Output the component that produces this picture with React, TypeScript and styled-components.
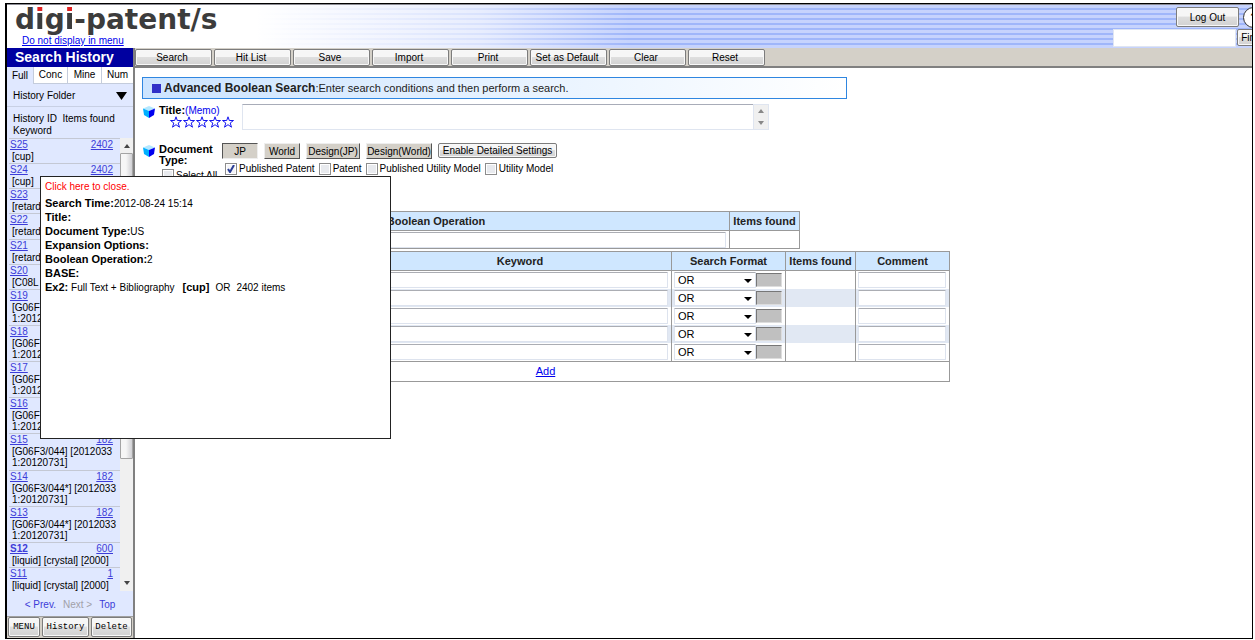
import React from "react";
import styled, { createGlobalStyle, css } from "styled-components";

const Global = createGlobalStyle`
  *, *::before, *::after { box-sizing: border-box; }
  body {
    margin: 0;
    background: #fff;
    color: #000;
    font: 10px/14px "Liberation Sans", Arial, sans-serif;
  }
  b, th { font-size: 11px; }
  button, input, select, textarea { font: inherit; color: inherit; margin: 0; }
`;

const Frame = styled.div`
  position: relative;
  display: flex;
  flex-direction: column;
  min-height: calc(100vh - 4px);
  margin: 3px 2px 1px 5px;
  border: 1px solid #000;
  border-left-width: 2px;
  overflow: hidden;
`;

const Header = styled.header`
  display: flex;
  justify-content: space-between;
  height: 44px;
  border-top: 1px solid #8c8c94;
  background:
    linear-gradient(90deg, #fff 20%, rgba(255, 255, 255, 0.6) 38%, rgba(255, 255, 255, 0) 50%),
    repeating-linear-gradient(180deg, #c6d3fd 0 3px, #9fb6fa 3px 5px);
`;

const Brand = styled.div`
  display: flex;
  flex-direction: column;
  align-items: flex-start;
  padding-left: 8px;
`;

const Logo = styled.div`
  height: 29px;
  color: #3c3c3c;
  font: bold 28px/30px "DejaVu Sans", Verdana, sans-serif;
  white-space: nowrap;
`;

const RedDot = styled.span`
  color: transparent;
  background: linear-gradient(180deg, #e02020 0 10px, #3c3c3c 10px);
  background-clip: text;
  -webkit-background-clip: text;
`;

const Link = styled.a<{ $soft?: boolean; $bold?: boolean }>`
  color: ${(p) => (p.$soft ? "#3c3cd8" : "#0000ee")};
  font-weight: ${(p) => (p.$bold ? "bold" : "normal")};
`;

const MenuLink = styled(Link)`
  margin-left: 7px;
  line-height: 13px;
`;

const HeaderTools = styled.div`
  display: flex;
  flex-direction: column;
  gap: 1px;
  width: 139px;
  padding-top: 2px;
  overflow: hidden;
`;

const ToolLine = styled.div<{ $indent?: boolean }>`
  display: flex;
  flex: none;
  gap: ${(p) => (p.$indent ? "4px" : "1px")};
  padding-left: ${(p) => (p.$indent ? "63px" : "0")};
`;

const Button = styled.button<{ $w?: number; $h?: number; $mono?: boolean }>`
  flex: none;
  width: ${(p) => (p.$w ? `${p.$w}px` : "auto")};
  height: ${(p) => p.$h ?? 17}px;
  padding: 0;
  border: 1px solid #7c7c7c;
  border-radius: 2px;
  background: linear-gradient(180deg, #f6f6f6 0 45%, #dedede 50%, #d2d2d2);
  box-shadow: inset 0 0 0 1px #f8f8f8;
  line-height: 13px;
  white-space: nowrap;
  ${(p) =>
    p.$mono &&
    css`
      font: 9px/14px "Liberation Mono", monospace;
    `}
`;

const Help = styled.button`
  flex: none;
  width: 21px;
  height: 21px;
  padding: 0;
  border: 1px solid #333;
  border-radius: 50%;
  background: #fff;
  font-weight: bold;
`;

const FindInput = styled.input`
  flex: none;
  width: 123px;
  height: 18px;
  padding: 0 2px;
  border: 1px solid #dfe5f2;
  background: #fff;
`;

const Columns = styled.div`
  display: flex;
  flex: 1;
  min-height: 0;
`;

const Sidebar = styled.aside`
  display: flex;
  flex: none;
  flex-direction: column;
  width: 128px;
  border-right: 2px solid #808080;
  background: #e0e8ff;
`;

const SideTitle = styled.h1`
  margin: 0;
  padding-left: 8px;
  background: #0000a0;
  color: #fff;
  font-size: 14px;
  line-height: 19px;
`;

const Tabs = styled.div`
  display: grid;
  grid-template-columns: 26px 34px 34px 1fr;
`;

const Tab = styled.button<{ $active?: boolean }>`
  height: 17px;
  padding: 0;
  border: 0;
  border-left: ${(p) => (p.$active ? "0" : "1px solid #c4ccdc")};
  border-bottom: ${(p) => (p.$active ? "0" : "1px solid #c4ccdc")};
  background: ${(p) => (p.$active ? "#e0e8ff" : "#fff")};
`;

const FolderRow = styled.button`
  display: flex;
  align-items: center;
  justify-content: space-between;
  height: 23px;
  padding: 1px 6px 0;
  border: 0;
  border-bottom: 1px solid #c8d0e4;
  background: none;
`;

const ListHead = styled.div`
  padding: 6px 6px 0;
  height: 31px;
  line-height: 12px;
  white-space: pre;
`;

const ListArea = styled.div`
  display: flex;
  flex: 1;
  margin-left: 2px;
`;

const HistoryList = styled.ul`
  display: flex;
  flex: 1;
  flex-direction: column;
  justify-content: space-between;
  margin: 0;
  padding: 0;
  list-style: none;
`;

const HistoryItem = styled.li`
  border-top: 1px solid #c4c8d4;
`;

const ItemTop = styled.div`
  display: flex;
  justify-content: space-between;
  padding: 0 7px 0 1px;
  line-height: 12px;
`;

const ItemText = styled.div`
  padding-left: 3px;
  line-height: 11px;
  white-space: pre;
`;

const ScrollBar = styled.div`
  display: flex;
  flex-direction: column;
  justify-content: space-between;
  align-items: center;
  width: 13px;
  padding: 6px 0;
  background: #f0f0f0;
`;

const Thumb = styled.div`
  flex: none;
  width: 13px;
  height: 306px;
  margin: 5px 0 auto;
  border: 1px solid #a4a4a4;
  border-radius: 1px;
  background: linear-gradient(90deg, #f6f6f6 0 45%, #d0d0d4);
`;

const Pager = styled.nav`
  display: flex;
  justify-content: center;
  gap: 7px;
  height: 26px;
  padding-top: 7px;
  border-bottom: 1px solid #a0a0a0;

  a { color: #3c3cd8; text-decoration: none; }
  span { color: #a0a0a8; }
`;

const SideButtons = styled.div`
  display: flex;
  gap: 2px;
  height: 21px;
  padding: 0 1px;
  background: #d4d0c8;
`;

const Main = styled.main`
  flex: 1;
  min-width: 0;
`;

const Toolbar = styled.div`
  display: flex;
  gap: 2px;
  height: 20px;
  padding-top: 1px;
  border-bottom: 2px solid #808080;
  background: #d4d0c8;
`;

const ToolButton = styled(Button)`
  padding-right: 3px;
`;

const Content = styled.div`
  padding: 9px 7px 0;
`;

const Banner = styled.div`
  display: flex;
  align-items: center;
  max-width: 705px;
  height: 22px;
  padding-left: 9px;
  border: 1px solid #2f86e0;
  background: linear-gradient(90deg, #cce4ff, #fff);
  color: #222;
  font-size: 11px;

  b { font-size: 12px; }
`;

const Square = styled.span`
  width: 9px;
  height: 9px;
  margin-right: 3px;
  background: #3030c8;
`;

const FieldRow = styled.div<{ $h: number; $top: number }>`
  display: grid;
  grid-template-columns: 16px 1fr;
  height: ${(p) => p.$h}px;
  margin-top: ${(p) => p.$top}px;
  padding-left: 1px;
`;

const FieldBody = styled.div`
  display: flex;
`;

const FieldLabel = styled.div<{ $w: number }>`
  flex: none;
  width: ${(p) => p.$w}px;
  padding-top: 1px;
  line-height: 11px;
`;

const Stars = styled.div`
  display: flex;
  gap: 1px;
  padding-left: 11px;
`;

const Memo = styled.textarea`
  width: 511px;
  height: 26px;
  border: 1px solid #dfe5f0;
  border-top-color: #a8acb8;
  border-right: 0;
  resize: none;
  overflow: hidden;
`;

const MemoScroll = styled.div`
  display: flex;
  flex-direction: column;
  align-items: center;
  justify-content: space-between;
  width: 16px;
  height: 26px;
  padding: 4px 0;
  border: 1px solid #dfe5f0;
  background: #f0f0f0;
`;

const TypeButtons = styled.div`
  display: flex;
  gap: 6px;
`;

const TypeButton = styled.button<{ $w: number; $on?: boolean }>`
  width: ${(p) => p.$w}px;
  height: 16px;
  padding: 0;
  border: 1px solid;
  border-color: ${(p) => (p.$on ? "#555 #eee #eee #555" : "#eee #555 #555 #eee")};
  background: #d4d0c8;
  line-height: 13px;
  white-space: nowrap;
`;

const Checks = styled.div`
  display: flex;
  gap: 4px;
  padding: 3px 0 0 3px;
`;

const CheckLabel = styled.label`
  display: flex;
  align-items: center;
  gap: 2px;
  white-space: nowrap;
`;

const CheckBox = styled.input.attrs({ type: "checkbox" })`
  appearance: none;
  flex: none;
  width: 12px;
  height: 12px;
  border: 1px solid #8c8c8c;
  background: #e8eaee;
  box-shadow: inset 0 0 0 1px #fff;

  &:checked {
    background: url("data:image/svg+xml,%3Csvg xmlns='http://www.w3.org/2000/svg' viewBox='0 0 10 10'%3E%3Cpath d='M2 5l2 3 4-7' fill='none' stroke='%232b3f96' stroke-width='2'/%3E%3C/svg%3E") center / 10px #f4f4f8;
  }
`;

const Table = styled.table<{ $max: number; $h: number; $top: number }>`
  width: 100%;
  max-width: ${(p) => p.$max}px;
  height: ${(p) => p.$h}px;
  margin-top: ${(p) => p.$top}px;
  table-layout: fixed;
  border-collapse: collapse;
  border: 1px solid #999;

  th {
    height: 19px;
    padding: 0;
    border: 1px solid #999;
    background: #cfe7ff;
    color: #222;
  }
  td {
    height: 18px;
    padding: 0 3px 0 2px;
    border-left: 1px solid #999;
    border-right: 1px solid #999;
  }
`;

const Stripe = styled.tr<{ $alt?: boolean }>`
  background: ${(p) => (p.$alt ? "#e1e8f3" : "#fff")};
`;

const AddCell = styled.td`
  && {
    height: 20px;
    border-top: 1px solid #999;
    text-align: center;
    font-size: 11px;
  }
`;

const TextInput = styled.input`
  display: block;
  width: 100%;
  height: 16px;
  padding: 0 3px;
  border: 1px solid #dde3ee;
  border-top-color: #abadb3;
  border-radius: 1px;
  background: #fff;
`;

const FormatCell = styled.div`
  display: flex;
  align-items: center;
`;

const Select = styled.select`
  appearance: none;
  flex: none;
  width: 82px;
  height: 16px;
  padding: 0 3px;
  border: 1px solid #dde3ee;
  border-top-color: #abadb3;
  border-radius: 1px;
  background: url("data:image/svg+xml,%3Csvg xmlns='http://www.w3.org/2000/svg' viewBox='0 0 8 4'%3E%3Cpath d='M0 0h8L4 4z'/%3E%3C/svg%3E") no-repeat right 3px top 6px / 8px 4px #fff;
  font-size: 11px;
`;

const GreyInput = styled.input`
  width: 26px;
  height: 14px;
  border: 1px solid #ddd;
  border-top-color: #777;
  border-left-color: #777;
  background: #c0c0c0;
`;

const Popup = styled.section`
  position: absolute;
  top: 172px;
  left: 33px;
  width: 351px;
  height: 263px;
  padding: 3px 4px;
  border: 1px solid #222;
  background: #fff;
`;

const CloseButton = styled.button`
  display: block;
  margin-bottom: 2px;
  padding: 0;
  border: 0;
  background: none;
  color: #f00;
  line-height: 14px;
`;

const DetailLine = styled.div`
  height: 14px;
`;

const Gap = styled.span<{ $w: number }>`
  margin-left: ${(p) => p.$w}px;
`;

type Entry = { id: string; count?: string; text: string; bold?: boolean };

const range = "1:20120731]";
const entries: Entry[] = [
  { id: "S25", count: "2402", text: "[cup]" },
  { id: "S24", count: "2402", text: "[cup]" },
  { id: "S23", text: "[retard" },
  { id: "S22", text: "[retard" },
  { id: "S21", text: "[retard" },
  { id: "S20", text: "[C08L" },
  { id: "S19", text: `[G06F\n${range}` },
  { id: "S18", text: `[G06F\n${range}` },
  { id: "S17", text: `[G06F\n${range}` },
  { id: "S16", text: `[G06F\n${range}` },
  { id: "S15", count: "182", text: `[G06F3/044] [2012033\n${range}` },
  { id: "S14", count: "182", text: `[G06F3/044*] [2012033\n${range}` },
  { id: "S13", count: "182", text: `[G06F3/044*] [2012033\n${range}` },
  { id: "S12", count: "600", text: "[liquid] [crystal] [2000]", bold: true },
  { id: "S11", count: "1", text: "[liquid] [crystal] [2000]" },
];

const actions = ["Search", "Hit List", "Save", "Import", "Print", "Set as Default", "Clear", "Reset"];

const details: [string, string][] = [
  ["Search Time:", "2012-08-24 15:14"],
  ["Title:", ""],
  ["Document Type:", "US"],
  ["Expansion Options:", ""],
  ["Boolean Operation:", "2"],
  ["BASE:", ""],
];

const Cube = () => (
  <svg width="12" height="14" viewBox="0 -1 12 14" aria-hidden="true">
    <path d="M0 3.500L6 1l6 2.500L6 6z" fill="#b4e8ff" />
    <path d="M0 3.500L6 6v7L1 10z" fill="#00b0ff" />
    <path d="M12 3.500L6 6v7l5-3z" fill="#0000f0" />
  </svg>
);

const Star = () => (
  <svg width="12" height="12" viewBox="0 0 12 12" aria-hidden="true">
    <path d="M6 .8l1.300 3.700h4.200L8.200 7l1.300 4.200L6 8.700l-3.500 2.500L3.800 7 .5 4.500h4.200z" fill="none" stroke="#1414f0" />
  </svg>
);

const Arrow = ({ up, size = 6, color = "#444" }: { up?: boolean; size?: number; color?: string }) => (
  <svg width={size} height={size > 8 ? 8 : 4} viewBox="0 0 8 5" preserveAspectRatio="none" aria-hidden="true">
    <path d={up ? "M0 5h8L4 0z" : "M0 0h8L4 5z"} fill={color} />
  </svg>
);

export default function App() {
  return (
    <Frame>
      <Global />
      <Header>
        <Brand>
          <Logo>
            d<RedDot>i</RedDot>g<RedDot>i</RedDot>-patent/s
          </Logo>
          <MenuLink href="#menu">Do not display in menu</MenuLink>
        </Brand>
        <HeaderTools>
          <ToolLine $indent>
            <Button $w={63} $h={20}>Log Out</Button>
            <Help aria-label="Help">?</Help>
          </ToolLine>
          <ToolLine>
            <FindInput aria-label="Find text" />
            <Button $w={28}>Find</Button>
          </ToolLine>
        </HeaderTools>
      </Header>

      <Columns>
        <Sidebar>
          <SideTitle>Search History</SideTitle>
          <Tabs>
            <Tab $active>Full</Tab>
            <Tab>Conc</Tab>
            <Tab>Mine</Tab>
            <Tab>Num</Tab>
          </Tabs>
          <FolderRow>
            History Folder
            <Arrow size={11} color="#000" />
          </FolderRow>
          <ListHead>{"History ID  Items found\nKeyword"}</ListHead>
          <ListArea>
            <HistoryList>
              {entries.map((e) => (
                <HistoryItem key={e.id}>
                  <ItemTop>
                    <Link $soft $bold={e.bold} href={`#${e.id}`}>{e.id}</Link>
                    {e.count && <Link $soft href={`#${e.id}-items`}>{e.count}</Link>}
                  </ItemTop>
                  <ItemText>{e.text}</ItemText>
                </HistoryItem>
              ))}
            </HistoryList>
            <ScrollBar>
              <Arrow up />
              <Thumb />
              <Arrow />
            </ScrollBar>
          </ListArea>
          <Pager>
            <a href="#prev">&lt; Prev.</a>
            <span>Next &gt;</span>
            <a href="#top">Top</a>
          </Pager>
          <SideButtons>
            <Button $w={32} $h={20} $mono>MENU</Button>
            <Button $w={47} $h={20} $mono>History</Button>
            <Button $w={41} $h={20} $mono>Delete</Button>
          </SideButtons>
        </Sidebar>

        <Main>
          <Toolbar>
            {actions.map((a) => (
              <ToolButton key={a} $w={77}>{a}</ToolButton>
            ))}
          </Toolbar>
          <Content>
            <Banner>
              <Square />
              <b>Advanced Boolean Search</b>:Enter search conditions and then perform a search.
            </Banner>

            <FieldRow $h={26} $top={5}>
              <Cube />
              <FieldBody>
                <FieldLabel $w={83}>
                  <b>Title:</b>
                  <Link as="label" htmlFor="memo">(Memo)</Link>
                  <Stars><Star /><Star /><Star /><Star /><Star /></Stars>
                </FieldLabel>
                <Memo id="memo" />
                <MemoScroll>
                  <Arrow up color="#888" />
                  <Arrow color="#888" />
                </MemoScroll>
              </FieldBody>
            </FieldRow>

            <FieldRow $h={55} $top={13}>
              <Cube />
              <FieldBody>
                <FieldLabel $w={63}>
                  <b>Document Type:</b>
                  <Checks>
                    <CheckLabel><CheckBox />Select All</CheckLabel>
                  </Checks>
                </FieldLabel>
                <div>
                  <TypeButtons>
                    <TypeButton $w={36} $on>JP</TypeButton>
                    <TypeButton $w={36}>World</TypeButton>
                    <TypeButton $w={54}>Design(JP)</TypeButton>
                    <TypeButton $w={66}>Design(World)</TypeButton>
                    <Button $w={119} $h={15}>Enable Detailed Settings</Button>
                  </TypeButtons>
                  <Checks>
                    <CheckLabel><CheckBox defaultChecked />Published Patent</CheckLabel>
                    <CheckLabel><CheckBox />Patent</CheckLabel>
                    <CheckLabel><CheckBox />Published Utility Model</CheckLabel>
                    <CheckLabel><CheckBox />Utility Model</CheckLabel>
                  </Checks>
                </div>
              </FieldBody>
            </FieldRow>

            <Table $max={658} $h={37} $top={13}>
              <colgroup>
                <col />
                <col style={{ width: 70 }} />
              </colgroup>
              <thead>
                <tr>
                  <th>Boolean Operation</th>
                  <th>Items found</th>
                </tr>
              </thead>
              <tbody>
                <tr>
                  <td><TextInput aria-label="Boolean Operation" /></td>
                  <td />
                </tr>
              </tbody>
            </Table>

            <Table $max={808} $h={131} $top={2}>
              <colgroup>
                <col style={{ width: 226 }} />
                <col />
                <col style={{ width: 114 }} />
                <col style={{ width: 70 }} />
                <col style={{ width: 94 }} />
              </colgroup>
              <thead>
                <tr>
                  <th />
                  <th>Keyword</th>
                  <th>Search Format</th>
                  <th>Items found</th>
                  <th>Comment</th>
                </tr>
              </thead>
              <tbody>
                {[0, 1, 2, 3, 4].map((n) => (
                  <Stripe key={n} $alt={n % 2 === 1}>
                    <td />
                    <td><TextInput aria-label={`Keyword ${n + 1}`} /></td>
                    <td>
                      <FormatCell>
                        <Select aria-label={`Search format ${n + 1}`}>
                          <option>OR</option>
                        </Select>
                        <GreyInput disabled aria-label={`Distance ${n + 1}`} />
                      </FormatCell>
                    </td>
                    <td />
                    <td><TextInput aria-label={`Comment ${n + 1}`} /></td>
                  </Stripe>
                ))}
                <tr>
                  <AddCell colSpan={5}><Link href="#add">Add</Link></AddCell>
                </tr>
              </tbody>
            </Table>
          </Content>
        </Main>
      </Columns>

      <Popup>
        <CloseButton>Click here to close.</CloseButton>
        {details.map(([name, value]) => (
          <DetailLine key={name}>
            <b>{name}</b>
            {value}
          </DetailLine>
        ))}
        <DetailLine>
          <b>Ex2:</b> Full Text + Bibliography
          <Gap $w={8}><b>[cup]</b></Gap>
          <Gap $w={6}>OR</Gap>
          <Gap $w={6}>2402 items</Gap>
        </DetailLine>
      </Popup>
    </Frame>
  );
}
